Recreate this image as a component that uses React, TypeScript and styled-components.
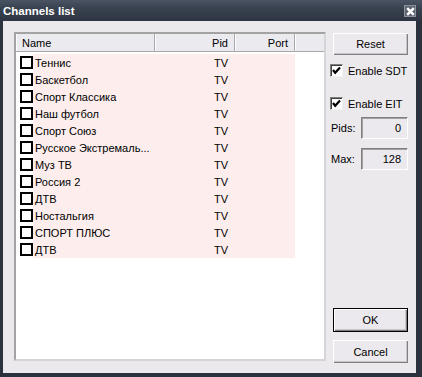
import styled, { createGlobalStyle } from "styled-components"

const channels = [
    'Теннис',
    'Баскетбол',
    'Спорт Классика',
    'Наш футбол',
    'Спорт Союз',
    'Русское Экстремаль...',
    'Муз ТВ',
    'Россия 2',
    'ДТВ',
    'Ностальгия',
    'СПОРТ ПЛЮС',
    'ДТВ',
]

function Tick () {
    return (
        <svg width="9" height="9" viewBox="0 0 9 9">
            <path d="M1 4 L3.2 6.8 L8 1.5" stroke="#000" strokeWidth="2.2" fill="none" />
        </svg>
    )
}

function App () {
    return (
        <>
            <GlobalStyle />
            <Window>
                <TitleBar>
                    <span>Channels list</span>
                    <CloseButton>
                        <svg width="9" height="9" viewBox="0 0 9 9">
                            <path d="M1.2 1.2 L7.8 7.8 M7.8 1.2 L1.2 7.8" stroke="#fff" strokeWidth="2.4" />
                        </svg>
                    </CloseButton>
                </TitleBar>
                <Client>
                    <ListBox>
                        <Header>
                            <HeaderCell width={139}>Name</HeaderCell>
                            <HeaderCell width={80} right>Pid</HeaderCell>
                            <HeaderCell width={60} right>Port</HeaderCell>
                            <HeaderCell width={28} />
                        </Header>
                        <Rows>
                            {channels.map((name, n) => (
                                <Row key={'ch' + n}>
                                    <ListCheck />
                                    <Cells>
                                        <NameCell>{name}</NameCell>
                                        <PidCell>TV</PidCell>
                                        <PortCell />
                                    </Cells>
                                </Row>
                            ))}
                        </Rows>
                    </ListBox>
                    <Side>
                        <Button>Reset</Button>
                        <CheckRow top={9}>
                            <CheckBox><Tick /></CheckBox>
                            Enable SDT
                        </CheckRow>
                        <CheckRow top={20}>
                            <CheckBox><Tick /></CheckBox>
                            Enable EIT
                        </CheckRow>
                        <FieldRow top={7}>
                            <span>Pids:</span>
                            <Field>0</Field>
                        </FieldRow>
                        <FieldRow top={9}>
                            <span>Max:</span>
                            <Field>128</Field>
                        </FieldRow>
                        <Spacer />
                        <Button isDefault>OK</Button>
                        <Button style={{ marginTop: 8 }}>Cancel</Button>
                    </Side>
                </Client>
            </Window>
        </>
    )
}

export default App

//#region Styles
    const GlobalStyle = createGlobalStyle`
        body {
            margin: 0;
            background: #2b323d;
            font-family: "Liberation Sans", Arial, sans-serif;
            font-size: 11px;
        }
    `
    const Window = styled.div`
        width: 422px;
        height: 377px;
        box-sizing: border-box;
        display: flex;
        flex-direction: column;
        background: #2b323d;
        padding: 0 6px 4px 3px;
    `
    const TitleBar = styled.div`
        height: 21px;
        margin: 0 -6px 0 -3px;
        padding: 0 6px 0 3px;
        display: flex;
        align-items: center;
        justify-content: space-between;
        background: linear-gradient(#4a5464, #38414f 40%, #2e3542);
        color: #fff;
        font-weight: bold;
        font-size: 11.5px;
    `
    const CloseButton = styled.div`
        width: 12px;
        height: 12px;
        box-sizing: border-box;
        margin-top: 1px;
        display: flex;
        align-items: center;
        justify-content: center;
        background: #5e6674;
        border: 1px solid #8c939d;
    `
    const Client = styled.div`
        flex: 1;
        display: flex;
        gap: 4px;
        background: #ece9ed;
        padding: 11px 8px 12px 11px;
    `
    const ListBox = styled.div`
        width: 312px;
        box-sizing: border-box;
        background: #fff;
        border: 2px solid;
        border-color: #a3a3a3 #d6d4d8 #d6d4d8 #a3a3a3;
        display: flex;
        flex-direction: column;
    `
    const Header = styled.div`
        display: flex;
        height: 17px;
        border-bottom: 1px solid #a8a8ac;
        background: #ebeaef;
    `
    const HeaderCell = styled.div<{ width: number, right?: boolean }>`
        width: ${p => p.width}px;
        box-sizing: border-box;
        display: flex;
        align-items: center;
        justify-content: ${p => p.right ? 'flex-end' : 'flex-start'};
        padding: 0 6px;
        color: #000;
        border-right: 1px solid #a8a8ac;
        box-shadow: inset 1px 0 #fff;
        &:last-child {
            border-right: none;
            flex: 1;
        }
    `
    const Rows = styled.div`
        padding-top: 2px;
        display: flex;
        flex-direction: column;
    `
    const Row = styled.div`
        display: flex;
        align-items: center;
        height: 17px;
        width: 279px;
    `
    const ListCheck = styled.div`
        width: 13px;
        height: 13px;
        box-sizing: border-box;
        margin-left: 4px;
        border: 2px solid #000;
        background: #fff;
    `
    const Cells = styled.div`
        flex: 1;
        height: 100%;
        display: flex;
        align-items: center;
        background: #fdeeed;
    `
    const NameCell = styled.div`
        width: 122px;
        padding-left: 2px;
        box-sizing: border-box;
        white-space: nowrap;
        overflow: hidden;
    `
    const PidCell = styled.div`
        width: 80px;
        text-align: right;
        padding-right: 7px;
        box-sizing: border-box;
    `
    const PortCell = styled.div`
        flex: 1;
    `
    const Side = styled.div`
        width: 78px;
        display: flex;
        flex-direction: column;
        padding-top: 1px;
        margin-bottom: -2px;
    `
    const Button = styled.div<{ isDefault?: boolean }>`
        margin-left: 3px;
        width: 75px;
        height: ${p => p.isDefault ? 24 : 22}px;
        box-sizing: border-box;
        display: flex;
        align-items: center;
        justify-content: center;
        background: #ebe9ed;
        border: ${p => p.isDefault ? '1px solid #000' : 'none'};
        box-shadow: inset 1px 1px #fff, inset -1px -1px #808080, inset -2px -2px #c8c6cc;
        color: #000;
        &:last-child {
            height: 23px;
        }
    `
    const CheckRow = styled.div<{ top: number }>`
        display: flex;
        align-items: center;
        gap: 5px;
        margin-top: ${p => p.top}px;
        height: 13px;
    `
    const CheckBox = styled.div`
        width: 13px;
        height: 13px;
        box-sizing: border-box;
        display: flex;
        align-items: center;
        justify-content: center;
        background: #fff;
        border: 1px solid;
        border-color: #808080 #f0f0f0 #f0f0f0 #808080;
        box-shadow: inset 1px 1px #404040;
    `
    const FieldRow = styled.div<{ top: number }>`
        display: flex;
        align-items: center;
        justify-content: space-between;
        margin-top: ${p => p.top}px;
        padding-left: 1px;
    `
    const Field = styled.div`
        width: 47px;
        height: 22px;
        box-sizing: border-box;
        display: flex;
        align-items: center;
        justify-content: flex-end;
        padding-right: 6px;
        background: #ebe9ed;
        border: 1px solid;
        border-color: #808080 #fff #fff #808080;
        box-shadow: inset 1px 1px #a0a0a0;
    `
    const Spacer = styled.div`
        flex: 1;
    `
//#endregion
